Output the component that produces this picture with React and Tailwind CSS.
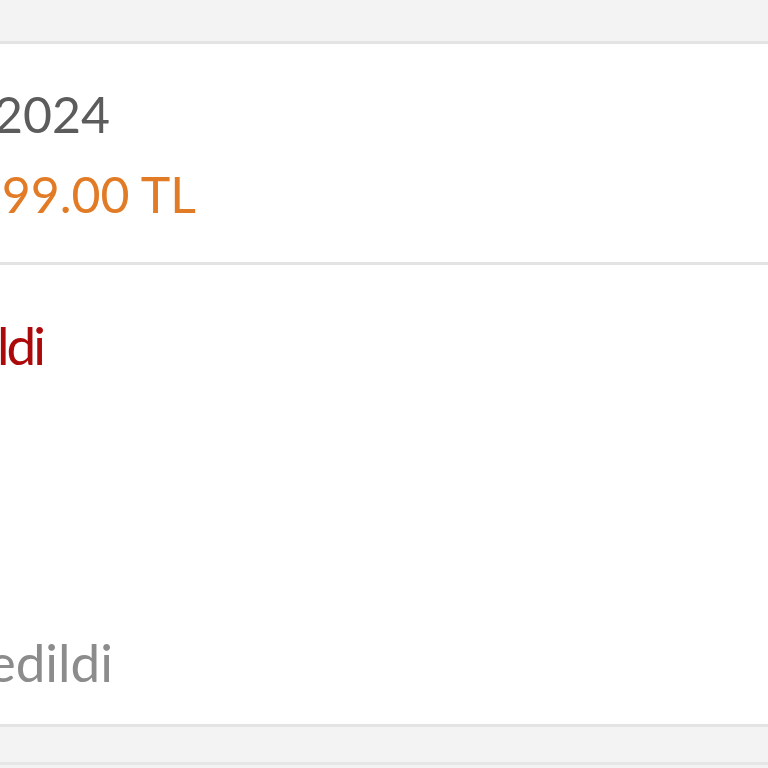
import React from "react";

const rows = [
  { value: "12.03.2024", end: "w-[110px]", color: "text-[#5c5c5c]" },
  { value: "1.299.00 TL", end: "w-[196px]", color: "text-[#e27b26]" },
];

const App = () => {
  return (
    <div className="w-[768px] h-[768px] overflow-hidden bg-[#f3f3f3] font-['Lato','Liberation_Sans',sans-serif]">
      {/* top gap */}
      <div className="h-[41px] bg-[#f3f3f3]" />

      {/* order summary card */}
      <div className="bg-white border-y-[3px] border-[#e3e3e3] pt-[30px] pb-[28px] overflow-hidden">
        {rows.map((r) => (
          <div key={r.value} className={`flex justify-end ${r.end}`}>
            <span className={`shrink-0 whitespace-nowrap text-[50px] leading-[80px] ${r.color}`}>
              {r.value}
            </span>
          </div>
        ))}
      </div>

      {/* status card */}
      <div className="bg-white border-b-[3px] border-[#e3e3e3] h-[462px] flex flex-col justify-between pt-[50px] pb-[32px] overflow-hidden">
        <div className="flex justify-end w-[43px]">
          <span className="shrink-0 whitespace-nowrap text-[53px] leading-[60px] tracking-[-3px] text-[#ac0a0a]">
            Sipariş iptal edildi
          </span>
        </div>
        <div className="flex justify-end w-[113px]">
          <span className="shrink-0 whitespace-nowrap text-[53px] leading-[60px] text-[#8c8c8c]">
            Ödeme iade edildi
          </span>
        </div>
      </div>

      <div className="h-[38px] bg-[#f3f3f3] border-b-[3px] border-[#e6e6e6]" />
    </div>
  );
};

export default App;
